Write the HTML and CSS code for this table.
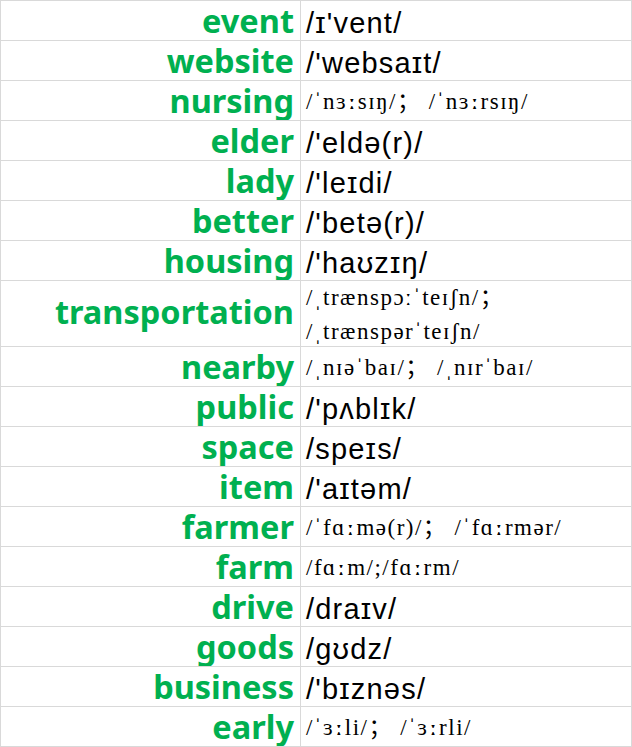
FILE: index.html
```html
<!DOCTYPE html>
<html>
<head>
<meta charset="utf-8">
<link rel="stylesheet" href="styles.css">
</head>
<body>
<div class="sheet">
  <div class="cell word">event</div><div class="cell ipa">/ɪ'vent/</div>
  <div class="cell word">website</div><div class="cell ipa">/'websaɪt/</div>
  <div class="cell word">nursing</div><div class="cell ipa serif">/ˈnɜ<span class="lm">ː</span>sɪŋ/； /ˈnɜ<span class="lm">ː</span>rsɪŋ/</div>
  <div class="cell word">elder</div><div class="cell ipa">/'eldə(r)/</div>
  <div class="cell word">lady</div><div class="cell ipa">/'leɪdi/</div>
  <div class="cell word">better</div><div class="cell ipa">/'betə(r)/</div>
  <div class="cell word">housing</div><div class="cell ipa">/'haʊzɪŋ/</div>
  <div class="cell word tall">transportation</div><div class="cell ipa serif tall two">/ˌtrænspɔːˈteɪʃn/；<br>/ˌtrænspərˈteɪʃn/</div>
  <div class="cell word">nearby</div><div class="cell ipa serif">/ˌnɪəˈbaɪ/； /ˌnɪrˈbaɪ/</div>
  <div class="cell word">public</div><div class="cell ipa">/'pʌblɪk/</div>
  <div class="cell word">space</div><div class="cell ipa">/speɪs/</div>
  <div class="cell word">item</div><div class="cell ipa">/'aɪtəm/</div>
  <div class="cell word">farmer</div><div class="cell ipa serif">/ˈfɑ<span class="lm">ː</span>mə(r)/； /ˈfɑ<span class="lm">ː</span>rmər/</div>
  <div class="cell word">farm</div><div class="cell ipa serif">/fɑ<span class="lm">ː</span>m/;/fɑ<span class="lm">ː</span>rm/</div>
  <div class="cell word">drive</div><div class="cell ipa">/draɪv/</div>
  <div class="cell word">goods</div><div class="cell ipa">/gʊdz/</div>
  <div class="cell word">business</div><div class="cell ipa">/'bɪznəs/</div>
  <div class="cell word">early</div><div class="cell ipa serif">/ˈɜ<span class="lm">ː</span>li/； /ˈɜ<span class="lm">ː</span>rli/</div>
</div>
</body>
</html>
```

FILE: styles.css
```css
* { box-sizing: border-box; }
html, body { margin: 0; padding: 0; background: #ffffff; }
.sheet {
  display: grid;
  grid-template-columns: 300px 331px;
  width: 632px;
  border-left: 1px solid #d9d9d9;
  border-top: 1px solid #d9d9d9;
}
.cell {
  height: 40px;
  border-right: 1px solid #d9d9d9;
  border-bottom: 1px solid #d9d9d9;
  display: flex;
  align-items: center;
  overflow: hidden;
  white-space: nowrap;
}
.tall { height: 66px; }
.word {
  justify-content: flex-end;
  padding-right: 6px;
  padding-top: 1px;
  font-family: "Noto Sans", sans-serif;
  font-weight: bold;
  font-size: 32.5px;
  line-height: 1;
  color: #00b050;
}
.word.tall { padding-top: 0; padding-bottom: 3px; }
.ipa {
  padding-left: 5px;
  padding-top: 5px;
  font-family: "Liberation Sans", Arial, sans-serif;
  font-size: 29px;
  line-height: 1;
  letter-spacing: 1.2px;
  color: #000;
}
.ipa.serif {
  padding-top: 2px;
  font-family: "Liberation Serif", "Noto Sans CJK SC", serif;
  font-size: 23px;
  line-height: 23px;
  letter-spacing: 1.5px;
}
.ipa.two { line-height: 34px; padding-top: 3px; }
.lm {
  font-family: "DejaVu Serif", serif;
  font-size: 22px;
  font-weight: bold;
  padding: 0 0.5px;
}
```
